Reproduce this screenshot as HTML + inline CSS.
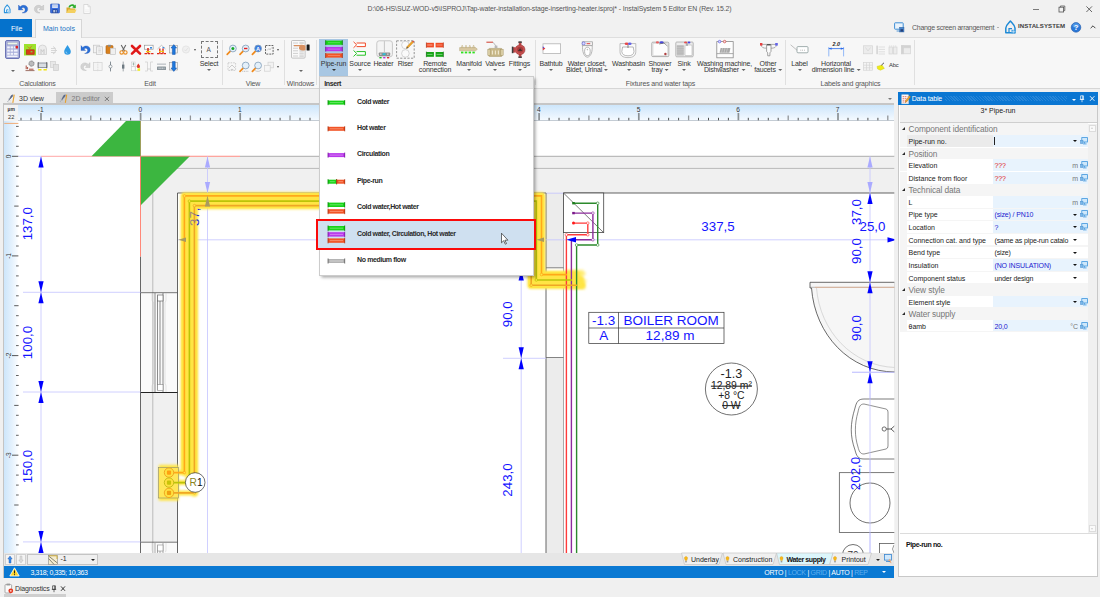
<!DOCTYPE html>
<html><head><meta charset="utf-8"><title>InstalSystem 5 Editor</title>
<style>
*{box-sizing:border-box;margin:0;padding:0}
html,body{width:1100px;height:597px;overflow:hidden;background:#f0f0f0;font-family:"Liberation Sans",sans-serif;font-size:7px;letter-spacing:0;color:#222}
.a{position:absolute}
.t{position:absolute;white-space:nowrap;line-height:1;margin-top:.6px}
b,.t[style*="bold"]{letter-spacing:-.38px}
svg{position:absolute;overflow:visible}
svg text{letter-spacing:0}
#title{left:0;top:0;width:1100px;height:19px;background:#f1f1f1}
#tabs{left:0;top:19px;width:1100px;height:18px;background:#f1f1f1}
#ribbon{left:0;top:36.6px;width:1100px;height:52.2px;background:#f7f7f7;border-top:1px solid #dedede;border-bottom:1px solid #d6d6d6}
.sep{position:absolute;top:40px;width:1px;height:45px;background:#e0e0e0}
.gl{position:absolute;top:80.4px;letter-spacing:-.15px;color:#555;line-height:7px;white-space:nowrap;transform:translateX(-50%)}
.bl{position:absolute;top:60.5px;letter-spacing:-.15px;color:#333;line-height:6.9px;white-space:nowrap;transform:translateX(-50%);text-align:center}
.ar{position:absolute;width:0;height:0;border-left:2px solid transparent;border-right:2px solid transparent;border-top:2.2px solid #666;transform:translateX(-50%)}
.ia{display:inline-block;width:0;height:0;border-left:2px solid transparent;border-right:2px solid transparent;border-top:2.2px solid #666;margin-left:2px;vertical-align:1.5px}
</style></head><body>
<div id="title" class="a"></div>
<div class="t" style="left:367.5px;top:5.6px;font-size:6.9px;letter-spacing:-.09px;color:#555">D:\06-HS\SUZ-WOD-v5\ISPROJ\Tap-water-installation-stage-inserting-heater.isproj* - InstalSystem 5 Editor EN (Rev. 15.2)</div>
<div id="tabs" class="a"></div>
<div class="a" style="left:0;top:19px;width:32px;height:18px;background:#0572cc"></div>
<div class="t" style="left:11px;top:24.5px;color:#fff">File</div>
<div class="a" style="left:35px;top:19px;width:47px;height:19px;background:#f7f7f7;border:1px solid #d6d6d6;border-bottom:none;z-index:2"></div>
<div class="t" style="left:43px;top:24.5px;color:#1a73c4;z-index:3">Main tools</div>
<div id="ribbon" class="a"></div>
<!-- quick access -->
<svg style="left:3px;top:4px" width="50" height="11" viewBox="0 0 50 11">
<path d="M1.4 5.2 C1.4 3.4 3 2.2 4.2 1 C5.4 2.2 7 3.4 7 5.2 V8.6 H1.4 Z" fill="#eaf5fd" stroke="#2d93dc" stroke-width="1.1" stroke-linejoin="round"/><path d="M3.6 8.6 V5.8 H5.4" fill="none" stroke="#2d93dc" stroke-width=".9"/><rect x="4.6" y="6.6" width="2.6" height="2.2" fill="#9fd0f2"/>
<path d="M1 1.6 L1 6.6 L5.6 6.4 L4 4.9 C5.6 3.4 8 4.4 7.6 6.8 C7.3 8.3 6.2 9.1 4.6 9.4 C8 10.2 10.4 8.2 10.2 5.4 C10 2 5.6 .6 2.8 3.4 Z" fill="#2a6fd6" stroke="#1b4fb0" stroke-width=".3" transform="translate(14.5,-.6)"/>
<path d="M10 1.6 L10 6.6 L5.4 6.4 L7 4.9 C5.4 3.4 3 4.4 3.4 6.8 C3.7 8.3 4.8 9.1 6.4 9.4 C3 10.2 .6 8.2 .8 5.4 C1 2 5.4 .6 8.2 3.4 Z" fill="#d0d0d0" stroke="#b4b4b4" stroke-width=".4" transform="translate(30.6,-.6)"/>
</svg>
<svg style="left:50px;top:3px" width="42" height="12" viewBox="0 0 42 12">
<rect x="0.5" y="1" width="9" height="9" rx=".8" fill="#3a6ede" stroke="#2a50b4" stroke-width=".6"/><rect x="2.2" y="1.4" width="5.6" height="3.6" fill="#e4ecfa"/><path d="M2.8 2.6 H7.2 M2.8 3.8 H7.2" stroke="#9ab0dc" stroke-width=".5"/><rect x="2.5" y="6.4" width="5" height="3.4" fill="#1c3a84"/><rect x="3.4" y="7" width="1.4" height="2.4" fill="#dfe9f8"/><rect x="5.6" y="7" width="1.2" height="2.4" fill="#9ab0dc"/>
<path d="M16.5 4.5 H19.5 L20.5 5.4 H25 V10 H16.5 Z" fill="#d8a82c"/><path d="M16.5 10 L18.2 6.4 H26.5 L25 10 Z" fill="#f4d060"/><path d="M18.4 4.2 C19.4 1 23.4 .6 24.6 2.4 L25.8 1.4 L25.8 5.2 L22.2 4.4 L23.4 3.5 C22.6 2.4 20.6 2.8 20 4.4 Z" fill="#2cac2c"/>
<path d="M33.8 1.5 H38 L40.2 3.7 V10.5 H33.8 Z" fill="#fbfbfb" stroke="#cfcfcf" stroke-width=".7"/><path d="M38 1.5 V3.7 H40.2" fill="none" stroke="#cfcfcf" stroke-width=".6"/><path d="M35 7 H39 M35 8.6 H39" stroke="#e6e6e6" stroke-width=".5"/>
</svg>
<!-- window controls -->
<div class="a" style="left:1032.6px;top:8.5px;width:6.2px;height:.9px;background:#7a7a7a"></div>
<svg style="left:1058px;top:4.5px" width="8" height="8" viewBox="0 0 8 8"><rect x="1" y="2.2" width="4.6" height="4.8" fill="none" stroke="#555" stroke-width=".8"/><path d="M2.4 2.2 V1 H6.8 V5.6 H5.6" fill="none" stroke="#555" stroke-width=".8"/></svg>
<svg style="left:1085.5px;top:5.6px" width="7" height="7" viewBox="0 0 7 7"><path d="M.4 .4 L6 6 M6 .4 L.4 6" stroke="#444" stroke-width=".8"/></svg>
<!-- right of tab row -->
<svg style="left:894px;top:22px" width="12" height="12" viewBox="0 0 12 12"><rect x=".6" y=".8" width="8.6" height="6.4" rx=".6" fill="#e9f3fc" stroke="#3f8fd6" stroke-width="1"/><path d="M2.6 9 H6" stroke="#3f8fd6" stroke-width=".9"/><rect x="5.6" y="5.2" width="4.4" height="4.8" fill="#4a86cc" stroke="#2d5f9c" stroke-width=".4"/><rect x="6.5" y="7.2" width="2.6" height="2.4" fill="#233f78"/></svg>
<div class="t" style="left:912px;top:23.6px;color:#5a5a5a;letter-spacing:-.28px">Change screen arrangement</div>
<div class="ar" style="left:998.3px;top:27px;border-left-width:1.5px;border-right-width:1.5px;border-top-width:1.7px;border-top-color:#777"></div>
<svg style="left:1004px;top:19.5px" width="14" height="15" viewBox="0 0 14 15"><path d="M1.8 8 C1.8 5 4.6 3.2 6.4 1 C8.2 3.2 11 5 11 8 V12.8 H1.8 Z" fill="none" stroke="#1e8ad6" stroke-width="1.5" stroke-linejoin="round"/><path d="M5 12.8 V8.6 H8" fill="none" stroke="#1e8ad6" stroke-width="1.2"/><rect x="7.4" y="9.8" width="4" height="3.6" fill="#4aa2e2"/><path d="M9.4 9.8 V13.4 M7.4 11.6 H11.4" stroke="#fff" stroke-width=".4"/></svg>
<div class="t" style="left:1018px;top:22.6px;font-size:6.1px;font-weight:bold;color:#3c3c3c;letter-spacing:0.05px">INSTALSYSTEM</div>
<svg style="left:1070px;top:21px" width="12" height="12" viewBox="0 0 12 12"><circle cx="6" cy="6.4" r="4.8" fill="#2a78d8" stroke="#1b55a8" stroke-width=".6"/><ellipse cx="6" cy="4.4" rx="3.4" ry="2.2" fill="#6aaef0" opacity=".6"/><text x="6" y="9" font-size="7.5" font-weight="bold" fill="#fff" text-anchor="middle" font-family="Liberation Sans">?</text></svg>
<svg style="left:1088.6px;top:24.4px" width="8" height="6" viewBox="0 0 8 6"><path d="M1.6 4.2 L4 1.8 L6.4 4.2" fill="none" stroke="#444" stroke-width="1"/></svg>
<!-- Calculations -->
<svg style="left:5px;top:40px" width="15" height="19" viewBox="0 0 15 19"><rect x=".5" y=".5" width="14" height="18" rx="1.5" fill="#a9afdb" stroke="#6c74b4"/><rect x="2.3" y="2.2" width="10.4" height="2.6" fill="#eef6e6" stroke="#8a90c0" stroke-width=".4"/><g fill="#f2f3fb"><rect x="2.2" y="6.4" width="2.6" height="2"/><rect x="5.6" y="6.4" width="2.6" height="2"/><rect x="9" y="6.4" width="1.6" height="2"/><rect x="2.2" y="9.6" width="2.6" height="2"/><rect x="5.6" y="9.6" width="2.6" height="2"/><rect x="9" y="9.6" width="3.6" height="2"/><rect x="2.2" y="12.8" width="2.6" height="2"/><rect x="5.6" y="12.8" width="2.6" height="2"/><rect x="9" y="12.8" width="3.6" height="2"/><rect x="2.2" y="15.6" width="10.4" height="1.4"/></g><rect x="10.6" y="5.8" width="2.4" height="2.6" rx=".6" fill="#e02020"/></svg>
<div class="ar" style="left:13px;top:69.5px"></div>
<svg style="left:24px;top:43.5px" width="50" height="12" viewBox="0 0 50 12"><rect x="0" y="0" width="12" height="11.5" fill="#9ce22c"/><rect x="2.2" y="5.8" width="8" height="4.6" fill="#d83a1a" stroke="#a02810" stroke-width=".5"/><path d="M3.5 2.5 L5.5 4.5 L8 1.8 M6 5.5 V3" stroke="#d87a1a" stroke-width=".8" fill="none"/><rect x="6.6" y="7" width="1.8" height="1.4" fill="#7fd040"/>
<path d="M14.5 10.5 V5 A4 4 0 0 1 22.5 5 V10.5 Z" fill="#ececec" stroke="#cfcfcf" stroke-width=".8"/><path d="M17 10 V5.5 L18.5 7.5 L20 5.5 V10" fill="none" stroke="#c6c6c6" stroke-width=".9"/>
<path d="M29 2.5 A4 4 0 0 1 29 10 M27 4.5 H31.5 M27 6.5 H33 M27 8.5 H31.5" fill="none" stroke="#d2d2d2" stroke-width=".9"/>
<path d="M43.5 1 C45 3.6 46.8 5.4 46.8 7.4 A3.3 3.3 0 0 1 40.200000000000003 7.4 C40.2 5.4 42 3.6 43.5 1 Z" fill="#2f9ae4"/><path d="M42 7.6 A1.6 1.6 0 0 0 43.3 9.3" stroke="#c4e6fb" stroke-width=".7" fill="none"/></svg>
<svg style="left:24px;top:60px" width="40" height="12" viewBox="0 0 40 12"><circle cx="7.5" cy="3.6" r="2.6" fill="#bbb" stroke="#555" stroke-width=".7" stroke-dasharray="1 .6"/><path d="M1.5 10.6 H10.5" stroke="#7a3a2a" stroke-width=".7"/><path d="M2.2 9.2 V5.5 M3.6 9.2 V7 M5 9.2 H9.5" stroke="#a03a2a" stroke-width=".9"/>
<rect x="14" y="3" width="9" height="4.4" fill="#d9dde2" stroke="#6e7680" stroke-width=".7"/><path d="M14.3 2 V8.4 M22.7 2 V8.4" stroke="#555" stroke-width=".7"/><path d="M14.2 9.8 H17.5 M19.5 9.8 H22.8" stroke="#f2e410" stroke-width="1.6"/>
<rect x="26.5" y="1.5" width="5" height="6" fill="#e8e8e8" stroke="#d0d0d0" stroke-width=".7"/><rect x="29.5" y="4.5" width="5" height="6" fill="#e2e2e2" stroke="#cdcdcd" stroke-width=".7"/></svg>
<div class="gl" style="left:37.5px">Calculations</div>
<div class="sep" style="left:76px"></div>
<!-- Edit row1 -->
<svg style="left:80px;top:44px" width="120" height="11" viewBox="0 0 120 11">
<path d="M1 1.6 L1 6.6 L5.6 6.4 L4 4.9 C5.6 3.4 8 4.4 7.6 6.8 C7.3 8.3 6.2 9.1 4.6 9.4 C8 10.2 10.4 8.2 10.2 5.4 C10 2 5.6 .6 2.8 3.4 Z" fill="#2a6fd6" stroke="#1b4fb0" stroke-width=".3"/>
<g fill="#f2f2f2" stroke="#c4c4c4" stroke-width=".7"><rect x="13.5" y="1.2" width="6" height="7.6"/><rect x="16.5" y="2.8" width="6" height="7.6"/></g><path d="M18.3 5 H20.8 M18.3 6.5 H20.8 M18.3 8 H20.8" stroke="#c9c9c9" stroke-width=".6"/>
<rect x="26" y="1.6" width="7" height="8" rx=".8" fill="#d8801c" stroke="#a85c10" stroke-width=".6"/><rect x="28" y=".8" width="3" height="1.8" fill="#8c8c8c"/><rect x="30.300000000000001" y="4.2" width="5.2" height="6.2" fill="#efefef" stroke="#bdbdbd" stroke-width=".6"/>
<path d="M41.2 1 L44.6 7 M45.8 1 L42.4 7" stroke="#666" stroke-width="1.1"/><circle cx="41.6" cy="8.4" r="1.7" fill="none" stroke="#e88a1c" stroke-width="1.1"/><circle cx="45.4" cy="8.4" r="1.7" fill="none" stroke="#e88a1c" stroke-width="1.1"/>
<path d="M52 2 L60 9.6 M60 2 L52 9.6" stroke="#e01818" stroke-width="2.6" stroke-linecap="round"/>
<rect x="64.5" y="1.2" width="8.6" height="4" fill="#fff" stroke="#888" stroke-width=".6"/><rect x="70" y="3" width="2" height="1.6" fill="#3a8ae0"/><path d="M68 4 V9.5" stroke="#e02818" stroke-width="1.6"/><path d="M64.5 9.600000000000001 H73.5" stroke="#e02818" stroke-width="1.4" stroke-dasharray="2.5 .8"/><path d="M66 7.6 H70.5" stroke="#f0d010" stroke-width="1.2"/>
<path d="M77.5 5 L81.5 1.3 L85.5 5" fill="#fff" stroke="#999" stroke-width=".6"/><rect x="82.5" y="3" width="1.8" height="1.4" fill="#3a8ae0"/><path d="M79.8 9.5 V4.6 M83 9.5 V4.6" stroke="#e02818" stroke-width="1.4"/><path d="M77 9.600000000000001 H86" stroke="#e02818" stroke-width="1.4" stroke-dasharray="2.5 .8"/><path d="M79 7.4 H84" stroke="#f0d010" stroke-width="1.1"/>
<rect x="89.5" y="1.600000000000001" width="8" height="7.4" fill="#f4f4f4" stroke="#999" stroke-width=".6"/><path d="M93.8 .6 L96.6 4 H95.2 V10.4 H92.4 V4 H91 Z" fill="#1f78dc" stroke="#0f4fa8" stroke-width=".5"/>
<circle cx="106" cy="5.5" r="3.6" fill="#f0f0f0" stroke="#dedede" stroke-width=".7"/><path d="M104.2 5.6 L105.6 7 L107.8 4.2" fill="none" stroke="#dcdcdc" stroke-width=".8"/>
</svg>
<div class="ar" style="left:195px;top:48.5px;border-left-width:1.8px;border-right-width:1.8px;border-top-width:2px;border-top-color:#505050"></div>
<!-- Edit row2 -->
<svg style="left:80px;top:61px" width="120" height="11" viewBox="0 0 120 11">
<path d="M10 1.6 L10 6.6 L5.4 6.4 L7 4.9 C5.4 3.4 3 4.4 3.4 6.8 C3.7 8.3 4.8 9.1 6.4 9.4 C3 10.2 .6 8.2 .8 5.4 C1 2 5.4 .6 8.2 3.4 Z" fill="#d4d4d4" stroke="#bcbcbc" stroke-width=".4"/>
<rect x="13.5" y="1.5" width="8.6" height="8" fill="#f4f4f4" stroke="#d2d2d2" stroke-width=".7"/><path d="M17.8 .8 V10.2" stroke="#d0d0d0" stroke-width=".6" stroke-dasharray="1.5 .8"/>
<path d="M30.5 .6 V10.4" stroke="#68747c" stroke-width=".8"/><circle cx="30.5" cy="5.5" r="1.5" fill="#fff" stroke="#68747c" stroke-width=".6"/>
<path d="M43.2 .6 V10.4" stroke="#8a9298" stroke-width=".8"/><rect x="42" y="3.6" width="2.4" height="4" fill="#6e7a82"/>
<g fill="#fdfdfd" stroke="#c8c8c8" stroke-width=".5"><rect x="51.5" y="1" width="3.6" height="4.2"/><rect x="51.5" y="5.8" width="3.6" height="4"/><rect x="55.7" y="5.8" width="3.6" height="4"/></g><rect x="57.5" y="7.4" width="2.6" height="2.4" fill="#f4f020"/><path d="M58.3 2.400000000000001 C59.4 3.8 60 4.4 60 5.4 A1.6 1.6 0 0 1 56.8 5.4 C56.8 4.4 57.4 3.8 58.3 2.4 Z" fill="#e03a2a"/><path d="M53.5 1.5 V4.5 M52.5 3 H54.5" stroke="#7a9a8a" stroke-width=".6"/>
<path d="M65 1 H67.5 V10 H65 M73 1 H70.5 V10 H73" fill="none" stroke="#d2d2d2" stroke-width=".8"/><path d="M67.5 8 H70.5" stroke="#bbb" stroke-width=".6"/>
<rect x="77" y="2.400000000000001" width="9" height="1.6" fill="#c8ccd0"/><rect x="77" y="5.4" width="9" height="3.6" rx=".6" fill="#8c969c"/><path d="M78.5 7.2 H84.5" stroke="#dfe4e8" stroke-width="1" stroke-dasharray="1.2 .6"/>
<rect x="89.5" y="1.600000000000001" width="8" height="7.4" fill="#f4f4f4" stroke="#999" stroke-width=".6"/><path d="M93.8 10.4 L96.6 7 H95.2 V.6 H92.4 V7 H91 Z" fill="#1f78dc" stroke="#0f4fa8" stroke-width=".5"/>
</svg>
<!-- Select -->
<div class="a" style="left:201px;top:41px;width:17px;height:17px;border:1px dashed #777"></div>
<div class="t" style="left:206.5px;top:46px;font-size:6.5px;color:#555;letter-spacing:0">A</div>
<div class="bl" style="left:209px">Select</div><div class="ar" style="left:209px;top:69px"></div>
<div class="gl" style="left:150px">Edit</div>
<div class="sep" style="left:222px"></div>
<!-- View -->
<svg style="left:226px;top:43.5px" width="50" height="12" viewBox="0 0 50 12">
<g id="mg"><path d="M1.2 10.3 L4.6 6.9" stroke="#f08a1c" stroke-width="1.7" stroke-linecap="round"/><circle cx="6.9" cy="4.5" r="3.4" fill="#e4f0fa" stroke="#7f9cb8" stroke-width=".8"/></g>
<circle cx="6.9" cy="4.5" r="1.5" fill="#18a828"/>
<g transform="translate(12.8,0)"><path d="M1.2 10.3 L4.6 6.9" stroke="#f08a1c" stroke-width="1.7" stroke-linecap="round"/><circle cx="6.9" cy="4.5" r="3.4" fill="#e4f0fa" stroke="#7f9cb8" stroke-width=".8"/><rect x="5.2" y="3.8" width="3.4" height="1.4" fill="#e02020"/></g>
<g transform="translate(25.2,0)"><path d="M1.2 10.3 L4.6 6.9" stroke="#f08a1c" stroke-width="1.7" stroke-linecap="round"/><circle cx="6.9" cy="4.5" r="3.4" fill="#3a7ae0" stroke="#7f9cb8" stroke-width=".8"/><text x="6.9" y="6.6" font-size="5.6" font-weight="bold" fill="#fff" text-anchor="middle" font-family="Liberation Sans">A</text></g>
<rect x="39.5" y="1.5" width="7.6" height="8.6" fill="none" stroke="#555" stroke-width=".9" stroke-dasharray="2 1"/><path d="M41 6.5 L43 4.5 L44 6 L45.5 3.5" fill="none" stroke="#aaa" stroke-width=".6"/>
</svg>
<div class="ar" style="left:278px;top:48.5px;border-left-width:1.8px;border-right-width:1.8px;border-top-width:2px;border-top-color:#505050"></div>
<svg style="left:226px;top:60.5px" width="50" height="12" viewBox="0 0 50 12">
<rect x="2" y="1.8" width="7.6" height="7.6" fill="none" stroke="#c4c4c4" stroke-width=".8" stroke-dasharray="1.6 1"/><path d="M3 7 L6 4 L9 7 M4.5 9 A2 2 0 0 1 7.5 9" fill="none" stroke="#b8b8b8" stroke-width=".7"/>
<g transform="translate(12.8,0)"><path d="M1.2 10.3 L4.6 6.9" stroke="#f08a1c" stroke-width="1.7" stroke-linecap="round"/><circle cx="6.9" cy="4.5" r="3.4" fill="#e4f0fa" stroke="#7f9cb8" stroke-width=".8"/><path d="M3.5 10.3 H9.5" stroke="#999" stroke-width=".6" stroke-dasharray="1 .7"/></g>
<g transform="translate(25.2,0)"><path d="M1.2 10.3 L4.6 6.9" stroke="#f08a1c" stroke-width="1.7" stroke-linecap="round"/><circle cx="6.9" cy="4.5" r="3.4" fill="#e4f0fa" stroke="#7f9cb8" stroke-width=".8"/><path d="M4 9.6 A4 3 0 0 0 10 9" stroke="#aaa" stroke-width=".6" fill="none"/></g>
<rect x="42" y="1.2" width="5.6" height="5.6" fill="#f2f2f2" stroke="#d2d2d2" stroke-width=".7"/><rect x="38.6" y="4.6" width="5.6" height="5.6" fill="#f6f6f6" stroke="#d2d2d2" stroke-width=".7"/>
</svg>
<div class="ar" style="left:278px;top:65.5px;border-left-width:1.8px;border-right-width:1.8px;border-top-width:2px;border-top-color:#505050"></div>
<div class="gl" style="left:253px">View</div>
<div class="sep" style="left:284px"></div>
<!-- Windows -->
<svg style="left:291px;top:40px" width="20" height="19" viewBox="0 0 20 19"><rect x=".5" y=".5" width="13.6" height="17.6" rx="1" fill="#fafafa" stroke="#b4b4b4" stroke-width=".8"/><g stroke="#bdbdbd" stroke-width=".7"><path d="M2 3 H7 M2 5.6 H7 M2 8.200000000000001 H7 M2 10.8 H7 M2 13.4 H7 M2 16 H7"/></g><g fill="#d9d9d9"><rect x="8.4" y="1.8" width="4.4" height="2.2"/><rect x="8.4" y="9.6" width="4.4" height="2.2"/><rect x="8.4" y="12.4" width="4.4" height="2.2"/><rect x="8.4" y="15.2" width="4.4" height="2"/></g><path d="M3 5 H9 C11 4.6 13 5 14.5 5.6 V10 C12.5 11 10 10.6 8.6 9.6 C7.6 8.6 7.8 7 8.6 6.200000000000001 H3 Z" fill="#d89060"/><rect x="15.6" y="4.6" width="3" height="5.8" rx=".5" fill="#181818"/></svg>
<div class="ar" style="left:301px;top:69.5px"></div>
<div class="gl" style="left:300.5px">Windows</div>
<div class="sep" style="left:316px"></div>
<!-- Insert group -->
<div class="a" style="left:319px;top:38.5px;width:29px;height:38px;background:#a8c7e3"></div>
<svg style="left:324.5px;top:40px" width="18" height="18" viewBox="0 0 18 18"><rect x=".5" y=".6" width="17" height="4.2" fill="#18d418"/><rect x=".5" y="7" width="17" height="4.2" fill="#b838ea"/><rect x=".5" y="13.4" width="17" height="4.2" fill="#f25426"/><g stroke-width=".5" stroke-opacity=".75"><path d="M3 2.7 H15" stroke="#b6f6b6"/><path d="M3 9.1 H15" stroke="#ecc0fa"/><path d="M3 15.5 H15" stroke="#fcc8b4"/></g><g stroke-width=".8"><path d="M.7 .2 V5.2 M17.3 .2 V5.2" stroke="#0a7a0a"/><path d="M.7 6.6 V11.6 M17.3 6.6 V11.6" stroke="#6a1a8c"/><path d="M.7 13 V18 M17.3 13 V18" stroke="#9c2c10"/></g></svg>
<div class="bl" style="left:333.5px">Pipe-run</div><div class="ar" style="left:333.5px;top:69px;border-top-color:#333"></div>
<svg style="left:352px;top:41px" width="15" height="17" viewBox="0 0 15 17"><path d="M1.5 .8 L4.6 3.8 L1.5 6.8 M4.6 2 H13.4 V5.6 H4.6" fill="#fff" stroke="#f04a28" stroke-width="1"/><path d="M1.5 9.4 L4.6 12.4 L1.5 15.4 M4.6 10.6 H13.4 V14.2 H4.6" fill="#fff" stroke="#22c022" stroke-width="1"/></svg>
<div class="bl" style="left:360px">Source</div><div class="ar" style="left:360px;top:69px"></div>
<svg style="left:375.5px;top:39.5px" width="18" height="19" viewBox="0 0 18 19"><rect x=".8" y=".8" width="15.6" height="16" rx="2.4" fill="#f4f4f4" stroke="#c2c2c2" stroke-width=".9"/><path d="M8.4 1.2 V12" stroke="#b0b0b0" stroke-width=".7"/><rect x="2.8" y="12.4" width="11.4" height="3.6" rx=".8" fill="#8e8e8e"/><rect x="6.6" y="13.2" width="3" height="2" fill="#30c0d8"/><rect x="4" y="13.4" width="1.6" height="1.6" fill="#c6c6c6"/><rect x="11" y="13.4" width="1.6" height="1.6" fill="#c6c6c6"/><rect x="3.4" y="17" width="2.2" height="1.4" fill="#20c020"/><rect x="7.2" y="17" width="2.2" height="1.4" fill="#b030e0"/><rect x="11" y="17" width="2.2" height="1.4" fill="#e03030"/></svg>
<div class="bl" style="left:383.5px">Heater</div>
<svg style="left:396px;top:39.5px" width="20" height="19" viewBox="0 0 20 19"><rect x=".6" y=".8" width="17.6" height="17.4" fill="none" stroke="#8a8a8a" stroke-width=".9" stroke-dasharray="2.2 1.4"/><circle cx="9.4" cy="5" r="3.8" fill="#fafafa" stroke="#bcbcbc" stroke-width=".6"/><circle cx="9.4" cy="13.4" r="3.8" fill="#fafafa" stroke="#bcbcbc" stroke-width=".6"/><path d="M10.4 8.4 L11 6.6 L16 1.2 L17.4 2.4 L12.2 7.8 Z" fill="#f0a628" stroke="#b87410" stroke-width=".4"/><path d="M16 1.2 L17.4 2.4 L18.2 1.4 L17 .4 Z" fill="#d84a3a"/><path d="M10.4 8.4 L11 6.6 L12.2 7.8 Z" fill="#555"/></svg>
<div class="bl" style="left:405.5px">Riser</div>
<svg style="left:426px;top:41.5px" width="18" height="16" viewBox="0 0 18 16"><rect x=".3" y=".8" width="7.6" height="4.6" fill="#f04a24"/><rect x="9.6" y=".8" width="7.8" height="4.6" fill="#f04a24"/><path d="M10.5 3 H16.5" stroke="#fcd0c0" stroke-width=".5"/><path d="M1.2 3 H6.5" stroke="#fcd0c0" stroke-width=".7"/><rect x=".3" y="10" width="7.6" height="4.8" fill="#14a414"/><rect x="9.6" y="10" width="7.8" height="4.8" fill="#14a414"/><path d="M1.2 12.4 H6.5 M10.5 12.4 H16.5" stroke="#b8f0b8" stroke-width=".6"/><g stroke="#0a5a0a" stroke-width=".6"><path d="M.4 9.6 V15.2 M17.4 9.6 V15.2"/></g><g stroke="#a02810" stroke-width=".6"><path d="M.4 .4 V5.8 M17.4 .4 V5.8"/></g></svg>
<div class="bl" style="left:435px">Remote<br>connection</div>
<svg style="left:459px;top:44px" width="20" height="11" viewBox="0 0 20 11"><g fill="#e8dcc0" stroke="#b8a878" stroke-width=".4"><path d="M2 4 L3.2 1 L4.4 4 Z M5.8 4 L7 1 L8.2 4 Z M9.6 4 L10.8 1 L12 4 Z M13.4 4 L14.6 1 L15.8 4 Z"/></g><path d="M.6 3.6 H16.6 L18.4 5.2 L16.6 6.8 H.6 Z" fill="#d8c8a0" stroke="#a89868" stroke-width=".4"/><g fill="#30e020"><rect x="2" y="7.6" width="2.4" height="1.8"/><rect x="5.8" y="7.6" width="2.4" height="1.8"/><rect x="9.6" y="7.6" width="2.4" height="1.8"/><rect x="13.4" y="7.6" width="2.4" height="1.8"/></g></svg>
<div class="bl" style="left:469px">Manifold</div><div class="ar" style="left:469px;top:69px"></div>
<svg style="left:485.5px;top:41px" width="19" height="17" viewBox="0 0 19 17"><path d="M.4 1.2 H7" stroke="#d03a2a" stroke-width="1"/><path d="M7 1.2 L10 5" stroke="#aaa" stroke-width=".8"/><rect x="8.600000000000001" y="4.6" width="2.8" height="2.4" fill="#b8b8b8"/><rect x="2.6" y="7.4" width="13.6" height="8" rx="1" fill="#c8b888" stroke="#a09060" stroke-width=".5"/><rect x="1.8" y="8.4" width="2.6" height="6" fill="#d8cca4" stroke="#a09060" stroke-width=".4"/><rect x="14.6" y="8.4" width="2.6" height="6" fill="#d8cca4" stroke="#a09060" stroke-width=".4"/><path d="M6.4 9.4 V13.4 M9.4 9.4 V13.4 M12.4 9.4 V13.4" stroke="#f0e8d0" stroke-width="1.1"/></svg>
<div class="bl" style="left:495px">Valves</div><div class="ar" style="left:495px;top:69px"></div>
<svg style="left:511px;top:40.5px" width="16" height="18" viewBox="0 0 16 18"><rect x="7.8" y=".6" width="2.6" height="16.4" fill="#c04848"/><rect x="7.4" y=".4" width="3.4" height="1.6" fill="#4a4a4a"/><rect x="7.4" y="15.4" width="3.4" height="1.6" fill="#4a4a4a"/><circle cx="9.1" cy="8.8" r="4.9" fill="#c85050" stroke="#8c2c2c" stroke-width=".5"/><circle cx="9.1" cy="8.8" r="3" fill="#a83c3c"/><path d="M6.8 10 L9.1 7.2 L11.4 10 Z" fill="#4a2c2c"/><rect x="1" y="6.2" width="3.6" height="5.4" fill="#c04848"/><rect x=".8" y="5.6" width="1.6" height="6.6" fill="#3c3c3c"/></svg>
<div class="bl" style="left:519.5px">Fittings</div><div class="ar" style="left:519.5px;top:69px"></div>
<div class="sep" style="left:535px"></div>
<!-- Fixtures -->
<svg style="left:542px;top:43px" width="20" height="11" viewBox="0 0 20 11"><rect x="1" y=".8" width="17.6" height="9.6" fill="#fff" stroke="#b4b4b4" stroke-width=".8"/><path d="M.8 3.8 L3.4 5.6 L.8 7.4 Z" fill="#e04040"/><path d="M.8 3.2 L2.4 4.4 L.8 5.4 Z" fill="#5050e0"/></svg>
<div class="bl" style="left:551px">Bathtub</div><div class="ar" style="left:551px;top:69px"></div>
<svg style="left:581px;top:40.5px" width="13" height="18" viewBox="0 0 13 18"><rect x="1.2" y=".8" width="10.4" height="3.6" fill="#f2f2f2" stroke="#9a9a9a" stroke-width=".7"/><circle cx="2.6" cy="2.4" r="1.5" fill="#dcdcfc" stroke="#5050e0" stroke-width=".6"/><rect x="5.6" y="2" width="3.6" height="1.2" fill="#e06060"/><path d="M1.6 4.6 C1.2 10 2.6 15.6 6.4 16.2 C10.2 15.6 11.6 10 11.200000000000001 4.6 Z" fill="#fafafa" stroke="#9a9a9a" stroke-width=".7"/><ellipse cx="6.4" cy="10.4" rx="2.8" ry="4.2" fill="#fff" stroke="#8a8a8a" stroke-width=".6"/><circle cx="6.4" cy="8.6" r=".8" fill="#bbb"/></svg>
<div class="bl" style="left:587px">Water closet,<br>Bidet, Urinal<span class="ia"></span></div>
<svg style="left:619px;top:41.5px" width="18" height="17" viewBox="0 0 18 17"><path d="M1 1.6 H16.8 V9.4 C16.8 13.4 14.4 15.6 9 15.6 C3.4 15.6 1 13.4 1 9.4 Z" fill="#fafafa" stroke="#a4a4a4" stroke-width=".7"/><path d="M3.6 5 H14.2 L15 9.6 C14.6 12.6 12.6 13.8 9 13.8 C5.4 13.8 3.2 12.6 2.8 9.6 Z" fill="#fff" stroke="#8c8c8c" stroke-width=".6"/><path d="M9 2 V6" stroke="#555" stroke-width=".7"/><ellipse cx="7.6" cy="1.8" rx="2" ry="1.2" fill="#e84848"/><ellipse cx="10.8" cy="1.8" rx="1.8" ry="1.2" fill="#6060e8"/></svg>
<div class="bl" style="left:628.5px">Washbasin</div><div class="ar" style="left:628.5px;top:69px"></div>
<svg style="left:650.5px;top:41px" width="19" height="17" viewBox="0 0 19 17"><rect x=".8" y="1.2" width="17" height="14.4" rx="1" fill="#fdfdfd" stroke="#9a9a9a" stroke-width=".8"/><rect x="2" y="2.4" width="14.6" height="12" fill="none" stroke="#c8c8c8" stroke-width=".5"/><ellipse cx="6.4" cy="1.4" rx="1.6" ry="1.1" fill="#e86060"/><ellipse cx="10.6" cy="1.4" rx="2" ry="1.2" fill="#4848e0"/><path d="M8 3 L13 2 L16.4 5" fill="none" stroke="#555" stroke-width=".6"/><circle cx="14.4" cy="13" r="1.2" fill="#b04040"/></svg>
<div class="bl" style="left:660px">Shower<br>tray<span class="ia"></span></div>
<svg style="left:674.5px;top:41px" width="19" height="17" viewBox="0 0 19 17"><rect x=".8" y="1" width="17.4" height="14.8" rx="1" fill="#ececec" stroke="#a8a8a8" stroke-width=".8"/><rect x="1.8" y="4" width="7" height="10.6" fill="#c4c4c4"/><path d="M1.8 5.6 H8.8 M1.8 7.4 H8.8 M1.8 9.200000000000001 H8.8 M1.8 11 H8.8 M1.8 12.8 H8.8" stroke="#a8a8a8" stroke-width=".5"/><rect x="10" y="4" width="7" height="10.6" rx=".8" fill="#fff" stroke="#a0a0a0" stroke-width=".5"/><ellipse cx="10.6" cy="1.4" rx="1.6" ry="1" fill="#e85050"/><ellipse cx="14" cy="1.4" rx="1.4" ry="1" fill="#4848e0"/><path d="M12 2 V5" stroke="#444" stroke-width=".6"/></svg>
<div class="bl" style="left:684px">Sink</div><div class="ar" style="left:684px;top:69px"></div>
<svg style="left:715.5px;top:40px" width="18" height="19" viewBox="0 0 18 19"><rect x=".8" y="1.6" width="16.4" height="16.2" fill="#fdfdfd" stroke="#8c8c8c" stroke-width=".8"/><path d="M.8 13.6 H17.2" stroke="#8c8c8c" stroke-width=".7"/><path d="M4.6 8 H14.4 L13.4 12.8 H3.6 Z" fill="#a8a8a8"/><path d="M6.6 8 L5.6 12.8 M9 8 L8 12.8 M11.4 8 L10.4 12.8" stroke="#d8d8d8" stroke-width=".6"/><circle cx="3.6" cy="1.6" r="1.3" fill="#d8d8fc" stroke="#4848e0" stroke-width=".6"/><circle cx="8.6" cy="1.6" r="1.3" fill="#fcd8d8" stroke="#c03030" stroke-width=".6"/></svg>
<div class="bl" style="left:724.5px">Washing machine,<br>Dishwasher<span class="ia"></span></div>
<svg style="left:759px;top:42px" width="20" height="15" viewBox="0 0 20 15"><path d="M2 2.4 H17.6 M2.2 2.4 C2.2 5.6 4.4 6.2 7.6 6.2 M17.4 2.4 C17.4 5.6 15.2 6.2 12 6.2" fill="none" stroke="#8c8c8c" stroke-width=".7"/><path d="M7.6 2.8 H12 V9.4 L10.9 10.8 V13.8 H8.7 V10.8 L7.6 9.4 Z" fill="#fcfcfc" stroke="#7c7c7c" stroke-width=".7"/><path d="M8 2.8 H11.6" stroke="#333" stroke-width="1"/><rect x="1" y="1" width="2.4" height="2.6" fill="#e84040"/><rect x="16.2" y="1" width="2.6" height="2.6" fill="#6464e8"/></svg>
<div class="bl" style="left:768px">Other<br>faucets<span class="ia"></span></div>
<div class="gl" style="left:660.5px">Fixtures and water taps</div>
<div class="sep" style="left:785px"></div>
<!-- Labels -->
<svg style="left:789.5px;top:43.5px" width="20" height="11" viewBox="0 0 20 11"><path d="M.6 .8 L7 6.2" stroke="#999" stroke-width=".6"/><rect x="7" y="2.600000000000001" width="11" height="6.2" rx="1" fill="#fff" stroke="#8a9a9a" stroke-width=".8"/><path d="M10.4 6.2 H11.2 M12.2 6.2 H13 M14 6.2 H14.8" stroke="#888" stroke-width=".7"/></svg>
<div class="bl" style="left:799.5px">Label</div><div class="ar" style="left:799.5px;top:69px"></div>
<svg style="left:828px;top:40.5px" width="17" height="16" viewBox="0 0 17 16"><path d="M.8 6 V15.4 M15.6 6 V15.4" stroke="#78a8f8" stroke-width=".8"/><path d="M.8 7.6 H15.6" stroke="#2a6ae8" stroke-width=".8"/><path d="M.8 7.6 L3.6 6.4 V8.8 Z M15.6 7.6 L12.8 6.4 V8.8 Z" fill="#2a6ae8"/><text x="8.2" y="5" font-size="5.4" font-weight="bold" font-style="italic" fill="#222" text-anchor="middle" font-family="Liberation Sans">2.0</text></svg>
<div class="bl" style="left:836px">Horizontal<br>dimension line<span class="ia"></span></div>
<svg style="left:863px;top:44.5px" width="50" height="10" viewBox="0 0 50 10"><g fill="#ececec" stroke="#d4d4d4" stroke-width=".7"><rect x=".5" y=".8" width="9" height="8"/><path d="M2.5 2.5 L5 6 L7.5 2.5" fill="none"/><rect x="13.4" y=".6" width="1.4" height="8.6" fill="#d0d0d0" stroke="none"/><path d="M15.6 2 H22 M15.6 4.4 H22 M15.6 6.8 H22 M15.6 9 H22" fill="none"/><rect x="26" y="2" width="3.6" height="7" /><rect x="30.4" y="2" width="3.6" height="7"/><path d="M26 1 H34" stroke-dasharray="1.2 .8"/><rect x="38.6" y=".8" width="9" height="8"/><rect x="38.6" y=".8" width="9" height="2" fill="#d2d2d2"/><rect x="38.6" y=".8" width="2" height="8" fill="#d2d2d2"/></g></svg>
<svg style="left:863px;top:61.5px" width="50" height="10" viewBox="0 0 50 10"><g fill="#f4f4f4" stroke="#d4d4d4" stroke-width=".7"><rect x=".5" y=".6" width="9" height="7.6"/><path d="M.5 3.2 H9.5 M.5 5.8 H9.5 M3.5 .6 V8.200000000000001 M6.5 .6 V8.200000000000001" fill="none"/></g><path d="M14 4.4 L19 3 L21.4 6.4 L17.4 8.200000000000001 L14.6 7 Z" fill="#f0ec18" stroke="#c8c410" stroke-width=".4"/><path d="M18.4 3.2 L21 .8" stroke="#444" stroke-width=".9"/></svg>
<div class="t" style="left:889px;top:62.5px;font-size:5.8px;letter-spacing:-.2px;color:#333">Abc</div>
<div class="gl" style="left:850.5px">Labels and graphics</div>
<div class="sep" style="left:914.3px"></div>
<!-- doc tabs -->
<div class="a" style="left:56.2px;top:92.1px;width:56.7px;height:11.4px;background:#cbcbcb"></div>
<svg style="left:7px;top:93.5px" width="70" height="10" viewBox="0 0 70 10"><g id="dti"><path d="M.4 8 L6 1.6" stroke="#9aa0a8" stroke-width=".7"/><path d="M2 6 L5.2 2.6 L5.8 .8 L4.2 1.6 Z" fill="#5a6a8a" stroke="#4a5878" stroke-width=".5"/><path d="M1 4.600000000000001 L3.6 7" stroke="#b0b4bc" stroke-width=".6"/><path d="M7.2 .6 L5.8 8.8" stroke="#e6a02a" stroke-width="1.1"/><path d="M.6 9 H5" stroke="#b8b8b8" stroke-width=".5"/></g><use href="#dti" x="52.5"/></svg>
<div class="t" style="left:19px;top:94.3px;color:#333">3D view</div>
<div class="t" style="left:71.5px;top:94.3px;color:#7a7a7a">2D editor</div>
<svg style="left:103.5px;top:96px" width="6" height="6" viewBox="0 0 6 6"><path d="M.8 .8 L5 5 M5 .8 L.8 5" stroke="#666" stroke-width=".8"/></svg>
<div class="ar" style="left:889.5px;top:98px;border-top-color:#777"></div>
<!-- editor frame -->
<div class="a" style="left:3.4px;top:103.2px;width:891px;height:474.5px;background:#e6e6e6;border-left:.9px solid #c4c4c4;border-top:2.2px solid #c6c6c6"></div>
<!-- rulers -->
<div class="a" style="left:4.3px;top:105.4px;width:14.1px;height:15.3px;background:#f3f3f3"></div>
<div class="a" style="left:18.4px;top:105.4px;width:875.9px;height:15.6px;background:linear-gradient(#cde6fb,#e2f0fd 55%,#f4faff);border-bottom:.8px solid #c4ccd4"></div>
<div class="a" style="left:4.3px;top:121px;width:14.1px;height:432px;background:linear-gradient(90deg,#cde6fb,#e4f1fd 55%,#fbfdff)"></div>
<div class="a" style="left:18.4px;top:121px;width:875.9px;height:432px;background:#fff"></div>
<div class="a" style="left:894.2px;top:103px;width:4.2px;height:476px;background:#f0f0f0"></div>
<svg style="left:0;top:0" width="1100" height="597" viewBox="0 0 1100 597" font-family="Liberation Sans">
<defs><clipPath id="cv"><rect x="18.4" y="121" width="875.9" height="432"/></clipPath>
<filter id="gl" x="-20%" y="-20%" width="140%" height="140%"><feGaussianBlur stdDeviation="1.1"/></filter>
<filter id="gl2" x="-30%" y="-30%" width="160%" height="160%"><feGaussianBlur stdDeviation="1.6"/></filter>
<path id="au" d="M0 0 L-2.6 11 H2.6 Z"/><path id="ad" d="M0 0 L-2.6 -11 H2.6 Z"/>
</defs>
<g clip-path="url(#cv)">
<!-- walls fill -->
<path d="M140.500000000000001 156.3 H895 V193 H177.5 V553 H140.5 Z" fill="#f0f0f0"/>
<rect x="546" y="193" width="17.5" height="75" fill="#ececec"/>
<rect x="546" y="357.5" width="17.5" height="196" fill="#ececec"/>
<rect x="141" y="293" width="36" height="99.5" fill="#fafafa"/>
<rect x="141" y="542.5" width="36" height="12" fill="#fafafa"/>
<!-- wall lines -->
<path d="M240 156.3 H895" stroke="#9a9a9a" stroke-width=".8"/>
<path d="M152.8 168.4 H895 M152.8 168.4 V553" fill="none" stroke="#a4a4a4" stroke-width=".7"/>
<path d="M177.500000000000001 553 V193 H546 M563.5 193 H895" fill="none" stroke="#484848" stroke-width=".85"/><path d="M546 193.2 H563.5" stroke="#c4c4ff" stroke-width=".8"/>
<path d="M140.500000000000001 256.5 V553" stroke="#555" stroke-width=".9"/>
<path d="M41 156.3 H240" stroke="#ff9c9c" stroke-width=".9"/>
<path d="M140.500000000000001 121 V256.5" stroke="#ff7a6a" stroke-width=".9"/>
<path d="M140.500000000000001 156.3 H240" stroke="#ff8c7c" stroke-width=".5"/>
<!-- green triangles -->
<path d="M126 121 H140.5 V156.3 H91.5 Z" fill="#3cb640"/>
<path d="M140.500000000000001 156.3 H189.8 L140.5 205.5 Z" fill="#3cb640"/>
<path d="M140.500000000000001 156.3 V205.5" stroke="#ff7a6a" stroke-width=".9"/><path d="M140.500000000000001 156.3 H189.8" stroke="#ff8c7c" stroke-width=".6"/>
<!-- window 1 -->
<path d="M140.500000000000001 292.7 H177.5" stroke="#555" stroke-width=".8"/>
<path d="M140.500000000000001 392.5 H177.5" stroke="#222" stroke-width="1.2"/>
<path d="M155 293 V392 M157.5 296 V390 M160 296 V390 M163 293 V392" stroke="#5a5a5a" stroke-width=".7"/>
<rect x="157.5" y="295" width="5.5" height="6" fill="#fff" stroke="#555" stroke-width=".6"/><rect x="157.5" y="384.5" width="5.5" height="6" fill="#fff" stroke="#777" stroke-width=".5"/>
<path d="M152 293 V300 Q152 302 153.5 302 V384 Q152 384 152 386 V392 M166 293 V300 Q166 302 165 302 V384 Q166 384 166 386 V392" fill="none" stroke="#c8c8c8" stroke-width=".5"/>
<!-- window 2 -->
<path d="M140.500000000000001 542.2 H177.5" stroke="#555" stroke-width=".8"/>
<path d="M155 543 V553 M157.5 546 V553 M160 546 V553 M163 543 V553" stroke="#777" stroke-width=".6"/><rect x="157.5" y="545" width="5.5" height="6" fill="#fff" stroke="#777" stroke-width=".5"/>
<path d="M152 543 V550 Q152 552 153.5 552 M166 543 V550 Q166 552 165 552" fill="none" stroke="#c8c8c8" stroke-width=".5"/>
<!-- partition wall -->
<path d="M546 193 V553" stroke="#666" stroke-width="1"/>
<path d="M563.5 193 V553" stroke="#888" stroke-width=".7"/>
<path d="M546 267.8 H563.5 M546 273.5 H563.5" stroke="#555" stroke-width=".7"/>
<path d="M546 357.5 H563.5" stroke="#666" stroke-width=".8"/>
<!-- shaft -->
<rect x="563.5" y="193" width="40.2" height="39.6" fill="#fff" stroke="#444" stroke-width=".8"/>
<path d="M564 193.5 L603.5 232.5" stroke="#5a5a5a" stroke-width=".8"/>
<!-- dim lines (lavender) -->
<g stroke="#c4c4ff" stroke-width=".8" fill="none">
<path d="M41 156.3 V553"/><path d="M23 292.3 H140.5 M23 392 H140.5 M23 541.9 H140.5"/>
<path d="M207.500000000000001 156.3 V553"/><path d="M178 239.8 H895"/>
<path d="M521.2 275 V553"/><path d="M503 358.3 H546"/>
<path d="M870 156.3 V553"/><path d="M852 372.3 H895"/>
</g>
<!-- highlight glow -->
<g filter="url(#gl)" fill="none" stroke="#ffe544" stroke-width="7.5" stroke-linejoin="round" stroke-linecap="round">
<path d="M184.4 472.6 V195.9 H541.5 V274.6 H576"/>
<path d="M189.4 482.6 V201.1 H536.3 V280 H580"/>
<path d="M194.4 492.9 V205.6 H531.2 V285.2 H582"/>
<rect x="160" y="466" width="17.5" height="33.5" fill="#ffe544" stroke-width="3" stroke-opacity=".8"/>
<path d="M169 472.6 H184.4 M169 482.6 H186 M169 492.9 H194.4" stroke-width="5"/>
</g>
<g fill="none" stroke="#ffe544" stroke-width="5.5" stroke-linejoin="round"><path d="M184.4 472.6 V195.9 H541.5 V274.6 H566"/><path d="M189.4 482.6 V201.1 H536.3 V280 H569"/><path d="M194.4 492.9 V205.6 H531.2 V285.2 H572"/></g>
<path d="M566 270 H583 L586 274 L582 277 L587 281 L582 285 L586 289 H566 Z" fill="#ffe544" opacity=".75" filter="url(#gl2)"/>
<!-- coloured pipes -->
<g fill="none" stroke-width="1.4">
<path d="M573.5 203.2 H597.7 V245 H576.6 V553" stroke="#2c8a2c"/>
<path d="M573.5 213.1 H592.9 V239.8 H571.4 V553" stroke="#8c2c9c"/>
<path d="M573.5 223.1 H587.8 V234.8 H566.4 V553" stroke="#ff3a3a"/>
</g>
<g fill="#fff" stroke-width=".6"><g stroke="#2c8a2c"><circle cx="597.7" cy="203.2" r="1.3"/><circle cx="597.7" cy="245" r="1.3"/><circle cx="576.6" cy="245" r="1.3"/></g><g stroke="#8c2c9c"><circle cx="592.9" cy="213.1" r="1.3"/><circle cx="592.9" cy="239.8" r="1.3"/></g><g stroke="#ff3a3a"><circle cx="587.8" cy="223.1" r="1.3"/><circle cx="587.8" cy="234.8" r="1.3"/><circle cx="566.4" cy="234.8" r="1.3"/></g></g>
<rect x="572.2" y="202" width="2.6" height="2.4" fill="#1a7a1a"/><rect x="572.2" y="211.9" width="2.6" height="2.4" fill="#7a1a8a"/><circle cx="573.5" cy="223.1" r="1.5" fill="#ff1a1a"/>
<!-- riser block -->
<rect x="158.6" y="467.6" width="20" height="30.4" fill="#ffe658" stroke="#8a8a70" stroke-width=".6"/>
<!-- highlighted pipes -->
<g fill="none" stroke-width="1.6">
<path d="M169 472.6 H184.4 V195.9 H541.5 V274.6 H567" stroke="#ffa818"/>
<path d="M169 482.6 H189.4 V201.1 H536.3 V280 H572" stroke="#bcc408"/>
<path d="M169 492.9 H194.4 V205.6 H531.2 V285.2 H577" stroke="#f0a624"/>
</g>
<g fill="#ffe544" stroke-width=".7"><circle cx="184.4" cy="195.9" r="1.3" stroke="#ffa818"/><circle cx="189.4" cy="201.1" r="1.3" stroke="#bcc408"/><circle cx="194.4" cy="205.6" r="1.3" stroke="#f0a624"/><circle cx="531.2" cy="285.2" r="1.3" stroke="#f0a624"/><circle cx="536.3" cy="280" r="1.3" stroke="#bcc408"/><circle cx="541.5" cy="274.6" r="1.3" stroke="#ffa818"/><circle cx="184.4" cy="472.6" r="1.2" stroke="#ffa818"/><circle cx="194.4" cy="492.9" r="1.2" stroke="#f0a624"/></g>
<g fill="#ffe040" stroke-width="1"><circle cx="169" cy="472.6" r="4.7" stroke="#f0a820"/><circle cx="169" cy="482.6" r="4.7" stroke="#c8bc18"/><circle cx="169" cy="492.9" r="4.7" stroke="#f0a820"/></g>
<rect x="166.9" y="470.5" width="4.2" height="4.2" rx="1" fill="#ffa010"/><rect x="166.9" y="480.5" width="4.2" height="4.2" rx="1" fill="#c8c408"/><rect x="166.9" y="490.8" width="4.2" height="4.2" rx="1" fill="#f0a010"/>
<circle cx="195.2" cy="482.5" r="9.8" fill="#fff" stroke="#333" stroke-width=".7"/>
<text x="189.6" y="486.3" font-size="10.2" fill="#111"><tspan fill="#8a8420">R</tspan><tspan dx=".1">1</tspan></text>
<clipPath id="c37"><rect x="186" y="208.4" width="20" height="30"/></clipPath><linearGradient id="g37" gradientUnits="userSpaceOnUse" x1="0" y1="-10" x2="0" y2="2"><stop offset="0" stop-color="#5a48a8" stop-opacity=".6"/><stop offset=".64" stop-color="#5a48a8" stop-opacity=".6"/><stop offset=".66" stop-color="#2a2ae0"/><stop offset="1" stop-color="#2a2ae0"/></linearGradient><g clip-path="url(#c37)"><text transform="translate(198.8,213) rotate(-90)" font-size="13.3" fill="url(#g37)" text-anchor="middle">37,0</text></g>
<!-- bathtub (corner) -->
<path d="M810 282.3 H895 V372 C850 372 815 335 811.5 288 H810 Z" fill="#f6f6f6" stroke="#444" stroke-width=".8"/>
<path d="M810 287.3 H895" stroke="#777" stroke-width=".5"/><path d="M815 287.3 H895" stroke="#f0a070" stroke-width=".5"/>
<path d="M816.5 288 C820 331 852 366 895 367.5" fill="none" stroke="#c4c4c4" stroke-width=".6"/>
<!-- washbasin -->
<path d="M895 399 H864 C858 399 856.5 402 855 408 C850 424 850 436 855 450 C856.5 456 858 459 864 459 H895" fill="#fff" stroke="#444" stroke-width=".7"/>
<path d="M864 404 L886 409 Q888 409.5 888 412 V446 Q888 448.5 886 449 L864 454 C860 454 859 451 858 447 C854.5 436 854.5 424 858 412 C859 407 860 404 864 404 Z" fill="#fff" stroke="#444" stroke-width=".6"/>
<circle cx="884.2" cy="429" r="2.1" fill="#fff" stroke="#333" stroke-width=".7"/><path d="M886.3 429 H891 M891 429 L895 425.5 M891 429 L895 432.5" stroke="#333" stroke-width=".8"/>
<!-- washing machine -->
<rect x="839.3" y="472.7" width="60" height="59.8" fill="#fff" stroke="#444" stroke-width=".7"/><circle cx="870" cy="503" r="20" fill="#fff" stroke="#333" stroke-width=".7"/>
<circle cx="853" cy="555" r="10.5" fill="#fff" stroke="#333" stroke-width=".7"/><rect x="879.5" y="543.5" width="20" height="15" fill="#fff" stroke="#444" stroke-width=".7"/><path d="M894 545 Q891 549 894 553" fill="none" stroke="#555" stroke-width=".6"/>
<text x="853" y="559.3" font-size="10" fill="#333" text-anchor="middle">70</text>
<!-- dims redraw above furniture -->
<path d="M870 282 V553" stroke="#c4c4ff" stroke-width=".8"/><path d="M852 372.3 H895" stroke="#c4c4ff" stroke-width=".8"/>
<!-- arrows -->
<g fill="#0000ff">
<use href="#au" x="41" y="156.6"/><use href="#ad" x="41" y="292.3"/><use href="#au" x="41" y="292.3"/><use href="#ad" x="41" y="392"/><use href="#au" x="41" y="392"/><use href="#ad" x="41" y="541.9"/><use href="#au" x="41" y="541.9"/>
<use href="#au" x="521.2" y="269.5"/><use href="#ad" x="521.2" y="358.3"/><use href="#au" x="521.2" y="358.3"/>
<use href="#au" x="870" y="193"/><use href="#ad" x="870" y="282.3"/><use href="#au" x="870" y="282.3"/><use href="#ad" x="870" y="372.3"/><use href="#au" x="870" y="372.3"/>
<path d="M566.5 239.8 L576 237 V242.6 Z"/><path d="M897 239.8 L887.5 237.2 V242.4 Z"/>
</g>
<g fill="#aaaaff"><use href="#au" x="207.5" y="156.6"/><use href="#ad" x="207.5" y="193"/><use href="#au" x="870" y="156.6"/><use href="#ad" x="870" y="193"/></g>
<g fill="#a89a60"><use href="#au" x="207.5" y="195.5" transform="translate(0,0)"/><path d="M178.5 239.8 L186 237.6 V242 Z"/><path d="M536.5 239.8 L544 237.6 V242 Z"/></g>
<!-- dim texts -->
<g fill="#1414ff" font-size="13.3" text-anchor="middle">
<text transform="translate(32,223.7) rotate(-90)">137,0</text>
<text transform="translate(32,342.5) rotate(-90)">100,0</text>
<text transform="translate(32,466.5) rotate(-90)">150,0</text>
<text transform="translate(512.4,314.3) rotate(-90)">90,0</text>
<text transform="translate(512.4,480) rotate(-90)">243,0</text>
<text transform="translate(861,212) rotate(-90)">37,0</text>
<text transform="translate(861,251) rotate(-90)">90,0</text>
<text transform="translate(861,328) rotate(-90)">90,0</text>
<text transform="translate(860.3,473.5) rotate(-90)">202,0</text>
<text x="718" y="231">337,5</text>
<text x="872.5" y="231">25,0</text>
</g>
<!-- room label -->
<rect x="588.8" y="312.3" width="135.2" height="31.2" fill="#fff" stroke="#333" stroke-width=".7"/><path d="M588.8 328 H724 M618.5 312.3 V343.5" stroke="#333" stroke-width=".7"/>
<g fill="#1414ff" font-size="13.5" text-anchor="middle"><text x="603.7" y="324.8">-1.3</text><text x="671.2" y="324.8">BOILER ROOM</text><text x="603.7" y="340">A</text><text x="670" y="340">12,89 m</text></g>
<circle cx="731.4" cy="389" r="26" fill="#fff" stroke="#333" stroke-width=".7"/>
<g fill="#222" text-anchor="middle"><text x="731.4" y="378.2" font-size="12.6">-1.3</text><text x="731.4" y="389.2" font-size="10.4" text-decoration="line-through">12,89 m²</text><text x="731.4" y="399.2" font-size="10.4">+8 °C</text><text x="731.4" y="408.6" font-size="10.4" text-decoration="line-through">0 W</text></g>
</g>
</svg>
<svg style="left:0;top:0" width="1100" height="597" viewBox="0 0 1100 597">
<path d="M21.0 117.8 V120.3 M31.0 117.8 V120.3 M50.9 117.8 V120.3 M60.9 117.8 V120.3 M70.9 117.8 V120.3 M80.8 117.8 V120.3 M100.7 117.8 V120.3 M110.7 117.8 V120.3 M120.7 117.8 V120.3 M130.6 117.8 V120.3 M150.6 117.8 V120.3 M160.5 117.8 V120.3 M170.5 117.8 V120.3 M180.5 117.8 V120.3 M200.4 117.8 V120.3 M210.3 117.8 V120.3 M220.3 117.8 V120.3 M230.3 117.8 V120.3 M250.2 117.8 V120.3 M260.2 117.8 V120.3 M270.1 117.8 V120.3 M280.1 117.8 V120.3 M300.0 117.8 V120.3 M310.0 117.8 V120.3 M319.9 117.8 V120.3 M329.9 117.8 V120.3 M349.8 117.8 V120.3 M359.8 117.8 V120.3 M369.7 117.8 V120.3 M379.7 117.8 V120.3 M399.6 117.8 V120.3 M409.6 117.8 V120.3 M419.6 117.8 V120.3 M429.5 117.8 V120.3 M449.5 117.8 V120.3 M459.4 117.8 V120.3 M469.4 117.8 V120.3 M479.3 117.8 V120.3 M499.3 117.8 V120.3 M509.2 117.8 V120.3 M519.2 117.8 V120.3 M529.2 117.8 V120.3 M549.1 117.8 V120.3 M559.0 117.8 V120.3 M569.0 117.8 V120.3 M579.0 117.8 V120.3 M598.9 117.8 V120.3 M608.9 117.8 V120.3 M618.8 117.8 V120.3 M628.8 117.8 V120.3 M648.7 117.8 V120.3 M658.7 117.8 V120.3 M668.6 117.8 V120.3 M678.6 117.8 V120.3 M698.5 117.8 V120.3 M708.5 117.8 V120.3 M718.5 117.8 V120.3 M728.4 117.8 V120.3 M748.3 117.8 V120.3 M758.3 117.8 V120.3 M768.3 117.8 V120.3 M778.2 117.8 V120.3 M798.2 117.8 V120.3 M808.1 117.8 V120.3 M818.1 117.8 V120.3 M828.0 117.8 V120.3 M848.0 117.8 V120.3 M857.9 117.8 V120.3 M867.9 117.8 V120.3 M877.9 117.8 V120.3" stroke="#3c3c3c" stroke-width=".9"/>
<path d="M90.8 115.6 V120.3 M190.4 115.6 V120.3 M290.0 115.6 V120.3 M389.7 115.6 V120.3 M489.3 115.6 V120.3 M588.9 115.6 V120.3 M688.6 115.6 V120.3 M788.2 115.6 V120.3 M887.8 115.6 V120.3" stroke="#909498" stroke-width="1.3"/>
<path d="M41.0 113 V120.3 M140.6 113 V120.3 M240.2 113 V120.3 M339.9 113 V120.3 M439.5 113 V120.3 M539.1 113 V120.3 M638.8 113 V120.3 M738.4 113 V120.3 M838.0 113 V120.3" stroke="#8a9094" stroke-width="1.7"/>
<text x="40.7" y="112.3" font-size="6.6" fill="#333" text-anchor="middle" font-family="Liberation Sans">-1</text>
<text x="140.3" y="112.3" font-size="6.6" fill="#333" text-anchor="middle" font-family="Liberation Sans">0</text>
<text x="239.9" y="112.3" font-size="6.6" fill="#333" text-anchor="middle" font-family="Liberation Sans">1</text>
<text x="339.6" y="112.3" font-size="6.6" fill="#333" text-anchor="middle" font-family="Liberation Sans">2</text>
<text x="439.2" y="112.3" font-size="6.6" fill="#333" text-anchor="middle" font-family="Liberation Sans">3</text>
<text x="538.8" y="112.3" font-size="6.6" fill="#333" text-anchor="middle" font-family="Liberation Sans">4</text>
<text x="638.5" y="112.3" font-size="6.6" fill="#333" text-anchor="middle" font-family="Liberation Sans">5</text>
<text x="738.1" y="112.3" font-size="6.6" fill="#333" text-anchor="middle" font-family="Liberation Sans">6</text>
<text x="837.7" y="112.3" font-size="6.6" fill="#333" text-anchor="middle" font-family="Liberation Sans">7</text>
<path d="M16 126.4 H18.7 M16 136.4 H18.7 M16 146.3 H18.7 M16 166.3 H18.7 M16 176.2 H18.7 M16 186.2 H18.7 M16 196.2 H18.7 M16 216.1 H18.7 M16 226.0 H18.7 M16 236.0 H18.7 M16 246.0 H18.7 M16 265.9 H18.7 M16 275.9 H18.7 M16 285.8 H18.7 M16 295.8 H18.7 M16 315.7 H18.7 M16 325.7 H18.7 M16 335.6 H18.7 M16 345.6 H18.7 M16 365.5 H18.7 M16 375.5 H18.7 M16 385.4 H18.7 M16 395.4 H18.7 M16 415.3 H18.7 M16 425.3 H18.7 M16 435.3 H18.7 M16 445.2 H18.7 M16 465.2 H18.7 M16 475.1 H18.7 M16 485.1 H18.7 M16 495.0 H18.7 M16 515.0 H18.7 M16 524.9 H18.7 M16 534.9 H18.7 M16 544.9 H18.7" stroke="#3c3c3c" stroke-width=".8"/>
<path d="M14.2 206.1 H18.6 M14.2 305.7 H18.6 M14.2 405.4 H18.6 M14.2 505.0 H18.6" stroke="#333" stroke-width=".8"/>
<path d="M12 156.3 H18.4 M12 255.9 H18.4 M12 355.6 H18.4 M12 455.2 H18.4" stroke="#444" stroke-width=".9"/>
<text transform="translate(10.8,156.3) rotate(-90)" x="0" y="0" font-size="6.6" fill="#333" text-anchor="middle" font-family="Liberation Sans">0</text>
<text transform="translate(10.8,255.9) rotate(-90)" x="0" y="0" font-size="6.6" fill="#333" text-anchor="middle" font-family="Liberation Sans">-1</text>
<text transform="translate(10.8,355.6) rotate(-90)" x="0" y="0" font-size="6.6" fill="#333" text-anchor="middle" font-family="Liberation Sans">-2</text>
<text transform="translate(10.8,455.2) rotate(-90)" x="0" y="0" font-size="6.6" fill="#333" text-anchor="middle" font-family="Liberation Sans">-3</text>
<path d="M4.3 123.4 H18.4" stroke="#f0a468" stroke-width=".9"/>
<path d="M18.4 156.3 H41" stroke="#c4c4ff" stroke-width=".8"/>
<text x="11.2" y="110.8" font-size="5" font-weight="bold" fill="#333" text-anchor="middle" font-family="Liberation Sans">µm</text>
<text x="11.2" y="119.3" font-size="5.6" fill="#333" text-anchor="middle" font-family="Liberation Sans">22</text>
</svg>
<!-- bottom layer bar -->
<div class="a" style="left:4.3px;top:553px;width:889.9px;height:12.5px;background:#e6e6e6"></div>
<div class="a" style="left:4.5px;top:554px;width:10px;height:11px;background:#f4f4f4;border:1px solid #d0d0d0"></div>
<div class="a" style="left:15.5px;top:554px;width:10px;height:11px;background:#f4f4f4;border:1px solid #d0d0d0"></div>
<svg style="left:4.5px;top:554px" width="22" height="11" viewBox="0 0 22 11"><path d="M5 2 L7.2 5 H6 V9 H4 V5 H2.8 Z" fill="#3a8ae8" stroke="#1a50a8" stroke-width=".4"/><path d="M16 9 L18.2 6 H17 V2 H15 V6 H13.8 Z" fill="#dcdcdc" stroke="#b0b0b0" stroke-width=".4"/></svg>
<div class="a" style="left:27px;top:553.5px;width:70.5px;height:11.5px;background:#efefef;border:1px solid #c4c4c4"></div>
<svg style="left:48px;top:554.5px" width="10" height="10" viewBox="0 0 10 10"><rect x=".5" y=".5" width="9" height="9" fill="#f4ecd0" stroke="#8a8a8a" stroke-width=".6"/><path d="M.6 1 L9.4 8 M.6 3.6 L6 9.4" stroke="#6a6a5a" stroke-width=".8"/><path d="M1 .8 H9 V4" fill="none" stroke="#d0b040" stroke-width="1"/></svg>
<div class="t" style="left:60.5px;top:554.8px;color:#222">-1</div>
<div class="ar" style="left:92.5px;top:558.5px;border-top-color:#222"></div>
<!-- layer tabs -->
<svg style="left:0;top:0" width="1100" height="597" viewBox="0 0 1100 597"><g stroke="#c4c4c4" stroke-width=".7"><path d="M681.5 553 L684.5 564.5 H719 L722.5 553 Z" fill="#f0f0f0"/><path d="M723 553 L726 564.5 H773 L776.5 553 Z" fill="#f0f0f0"/><path d="M832.5 553 L829.5 564.5 H868 L871.5 553 Z" fill="#f0f0f0"/><path d="M776.5 553 L779.5 564.5 H829.5 L833 553 Z" fill="#dcf6fb"/></g>
<g id="bulb" transform="translate(-2,1.6)"><path d="M686.5 557 A1.6 1.6 0 1 1 689.5 557 L688.8 559 H687.2 Z" fill="#f8b818" stroke="#c88a10" stroke-width=".3"/><rect x="687.2" y="559.3" width="1.6" height="1.5" fill="#9a9a9a"/></g><use href="#bulb" x="41.5"/><use href="#bulb" x="95.5"/><use href="#bulb" x="149"/>
<rect x="884.5" y="554.5" width="7" height="5.6" fill="#d0e8fc" stroke="#3a86d0" stroke-width=".8"/><path d="M888 561 L891.5 563.5 L890 558.5 Z" fill="#e8a878"/><path d="M886 561.5 H890" stroke="#3a86d0" stroke-width=".8"/></svg>
<div class="t" style="left:691px;top:555.2px;color:#222">Underlay</div>
<div class="t" style="left:733px;top:555.2px;color:#222">Construction</div>
<div class="t" style="left:786.5px;top:555.2px;color:#111;font-weight:bold">Water supply</div>
<div class="t" style="left:841.5px;top:555.2px;color:#222">Printout</div>
<div class="ar" style="left:877.5px;top:558.5px;border-top-color:#222"></div>
<!-- status bar -->
<div class="a" style="left:4.3px;top:565.5px;width:889.9px;height:12.2px;background:#0a79d3"></div>
<svg style="left:9px;top:567px" width="11" height="10" viewBox="0 0 11 10"><path d="M5.5 .8 L10.2 9 H.8 Z" fill="#fcd428" stroke="#fff" stroke-width=".8" stroke-linejoin="round"/><path d="M5.5 3.4 V6.4 M5.5 7.2 V8.200000000000001" stroke="#222" stroke-width="1"/></svg>
<div class="t" style="left:30.5px;top:568.3px;color:#fff;letter-spacing:-.36px">3,318; 0,335; 10,363</div>
<div class="t" style="left:764.3px;top:568.3px;color:#fff;letter-spacing:-.3px">ORTO | <span style="color:#5fb0f0">LOCK</span> | <span style="color:#5fb0f0">GRID</span> | AUTO | <span style="color:#5fb0f0">REP</span></div>
<div class="ar" style="left:883.5px;top:571px;border-top-color:#fff"></div>
<!-- diagnostics -->
<svg style="left:4px;top:582.5px" width="10" height="11" viewBox="0 0 10 11"><rect x="1" y="1.6" width="6.6" height="8.4" rx=".8" fill="#fafafa" stroke="#8a8a8a" stroke-width=".7"/><rect x="2.6" y=".6" width="3.4" height="1.8" fill="#9a9a9a"/><circle cx="6.8" cy="7.8" r="2.4" fill="#e83820"/><circle cx="6.8" cy="7.8" r=".9" fill="#fcd8d0"/></svg>
<div class="t" style="left:15px;top:584.3px;color:#333;letter-spacing:-.15px">Diagnostics</div>
<svg style="left:50.5px;top:584.5px" width="16" height="8" viewBox="0 0 16 8"><path d="M1.6 .8 V4.4 H4.4 V.8 M1.6 .8 H4.4 M.8 4.4 H5.2 M3 4.4 V7.2 M3.7 .8 V4.4" fill="none" stroke="#333" stroke-width=".7"/><path d="M10 1.4 L14 5.8 M14 1.4 L10 5.8" stroke="#222" stroke-width=".9"/></svg>
<div class="a" style="left:4px;top:594px;width:62px;height:3px;background:#cfcfcf"></div>
<!-- dropdown menu -->
<div class="a" style="left:318.9px;top:76.3px;width:215.6px;height:199.6px;background:#fff;border:1px solid #cccccc;box-shadow:1.5px 1.5px 3px rgba(0,0,0,.35)"></div>
<div class="a" style="left:319.9px;top:77.3px;width:213.6px;height:11.6px;background:#eeeeee;border-bottom:1px solid #dedede"></div>
<div class="t" style="left:324.2px;top:79.2px;font-weight:bold;color:#2a2a2a">Insert</div>
<div class="a" style="left:316.1px;top:219.1px;width:220.2px;height:31.2px;background:#cfe0f0;border:2.5px solid #fb0a0a"></div>
<div class="t" style="left:357px;top:97.2px;font-weight:bold;color:#2a2a2a">Cold water</div>
<div class="t" style="left:357px;top:123.4px;font-weight:bold;color:#2a2a2a">Hot water</div>
<div class="t" style="left:357px;top:149.7px;font-weight:bold;color:#2a2a2a">Circulation</div>
<div class="t" style="left:357px;top:176.4px;font-weight:bold;color:#2a2a2a">Pipe-run</div>
<div class="t" style="left:357px;top:202.7px;font-weight:bold;color:#2a2a2a">Cold water,Hot water</div>
<div class="t" style="left:357px;top:229.0px;font-weight:bold;color:#2a2a2a">Cold water, Circulation, Hot water</div>
<div class="t" style="left:357px;top:255.6px;font-weight:bold;color:#2a2a2a">No medium flow</div>
<svg style="left:0;top:0" width="1100" height="597" viewBox="0 0 1100 597">
<rect x="327.8" y="100.6" width="17.2" height="4" fill="#18d418"/><path d="M329.8 102.6 H343.0" stroke="#b6f6b6" stroke-width=".5"/><path d="M328.1 100.0 V105.2 M344.7 100.0 V105.2" stroke="#0a7a0a" stroke-width=".7"/>
<rect x="327.8" y="126.8" width="17.2" height="4" fill="#f25426"/><path d="M329.8 128.8 H343.0" stroke="#fcc8b4" stroke-width=".5"/><path d="M328.1 126.2 V131.4 M344.7 126.2 V131.4" stroke="#9c2c10" stroke-width=".7"/>
<rect x="327.8" y="153.1" width="17.2" height="4" fill="#b838ea"/><path d="M329.8 155.1 H343.0" stroke="#ecc0fa" stroke-width=".5"/><path d="M328.1 152.5 V157.7 M344.7 152.5 V157.7" stroke="#6a1a8c" stroke-width=".7"/>
<rect x="327.8" y="179.7" width="9" height="4" fill="#18d418"/><path d="M329.8 181.7 H334.8" stroke="#b6f6b6" stroke-width=".5"/><path d="M328.1 179.1 V184.3 M336.5 179.1 V184.3" stroke="#0a7a0a" stroke-width=".7"/>
<rect x="336.4" y="179.7" width="8.6" height="4" fill="#f25426"/><path d="M338.4 181.7 H343.0" stroke="#fcc8b4" stroke-width=".5"/><path d="M336.7 179.1 V184.3 M344.7 179.1 V184.3" stroke="#9c2c10" stroke-width=".7"/>
<rect x="327.8" y="202.6" width="17.2" height="4.4" fill="#18d418"/><path d="M329.8 204.8 H343.0" stroke="#b6f6b6" stroke-width=".5"/><path d="M328.1 202.0 V207.6 M344.7 202.0 V207.6" stroke="#0a7a0a" stroke-width=".7"/>
<rect x="327.8" y="209.2" width="17.2" height="4.4" fill="#f25426"/><path d="M329.8 211.4 H343.0" stroke="#fcc8b4" stroke-width=".5"/><path d="M328.1 208.6 V214.2 M344.7 208.6 V214.2" stroke="#9c2c10" stroke-width=".7"/>
<rect x="327.8" y="226.0" width="17.2" height="4.4" fill="#18d418"/><path d="M329.8 228.2 H343.0" stroke="#b6f6b6" stroke-width=".5"/><path d="M328.1 225.4 V231.0 M344.7 225.4 V231.0" stroke="#0a7a0a" stroke-width=".7"/>
<rect x="327.8" y="232.2" width="17.2" height="4.4" fill="#b838ea"/><path d="M329.8 234.4 H343.0" stroke="#ecc0fa" stroke-width=".5"/><path d="M328.1 231.6 V237.2 M344.7 231.6 V237.2" stroke="#6a1a8c" stroke-width=".7"/>
<rect x="327.8" y="238.4" width="17.2" height="4.4" fill="#f25426"/><path d="M329.8 240.6 H343.0" stroke="#fcc8b4" stroke-width=".5"/><path d="M328.1 237.8 V243.4 M344.7 237.8 V243.4" stroke="#9c2c10" stroke-width=".7"/>
<rect x="327.8" y="259.0" width="17.2" height="4" fill="#b4b4b4"/><path d="M329.8 261.0 H343.0" stroke="#f0f0f0" stroke-width=".5"/><path d="M328.1 258.4 V263.6 M344.7 258.4 V263.6" stroke="#555" stroke-width=".7"/>
<path d="M501.5 233.2 V242.8 L503.7 240.7 L505.3 244.2 L506.5 243.6 L504.9 240.2 H507.9 Z" fill="#fff" stroke="#222" stroke-width=".65"/>
</svg>
<!-- data table panel -->
<div class="a" style="left:898.2px;top:92.3px;width:199.8px;height:485.2px;background:#fff;border:1px solid #c8c8c8"></div>
<div class="a" style="left:898.2px;top:92.3px;width:199.8px;height:12.4px;background:#0a76d2"></div>
<div class="a" style="left:945px;top:96px;width:122px;height:5px;background:repeating-linear-gradient(45deg,#0a76d2 0,#0a76d2 1px,#3a90dc 1px,#3a90dc 2px);opacity:.6"></div>
<svg style="left:900.5px;top:93.5px" width="10" height="11" viewBox="0 0 10 11"><rect x=".8" y=".8" width="6.6" height="9" fill="#fafafa" stroke="#e8e0d0" stroke-width=".5"/><path d="M1.6 2.6 H6.4 M1.6 4.4 H6.4 M1.6 6.2 H6.4 M1.6 8 H6.4" stroke="#d84a3a" stroke-width=".7" stroke-dasharray="1.4 .6"/><path d="M4.2 8.6 L4.8 6.4 L8.4 1.8 L9.6 2.8 L6 7.4 Z" fill="#f0a628" stroke="#a86a10" stroke-width=".4"/></svg>
<div class="t" style="left:911.7px;top:94.7px;color:#fff;letter-spacing:-.15px">Data table</div>
<div class="ar" style="left:1073.5px;top:98.5px;border-top-color:#fff"></div>
<svg style="left:1078px;top:94.5px" width="18" height="8" viewBox="0 0 18 8"><path d="M2.600000000000001 .8 V4.4 H5.4 V.8 M2.600000000000001 .8 H5.4 M1.8 4.4 H6.2 M4 4.4 V7.2 M4.7 .8 V4.4" fill="none" stroke="#fff" stroke-width=".7"/><path d="M12 1.2 L16.4 5.8 M16.4 1.2 L12 5.8" stroke="#fff" stroke-width=".9"/></svg>
<div class="a" style="left:899.5px;top:104.7px;width:197.5px;height:18.6px;background:#f0f0f0;border-bottom:1px solid #cfcfcf"></div>
<div class="t" style="left:998px;top:106.8px;transform:translateX(-50%);color:#222">3* Pipe-run</div>
<div class="a" style="left:1088px;top:124px;width:8.5px;height:408.5px;background:#f0f0f0"></div>
<div class="a" style="left:1088.5px;top:124.5px;width:7.5px;height:7.5px;background:#fafafa;border:1px solid #dcdcdc"></div><div class="ar" style="left:1092.3px;top:127px;border-top:none;border-bottom:2px solid #cfcfcf;border-left-width:1.6px;border-right-width:1.6px"></div>
<div class="a" style="left:1088.5px;top:524.5px;width:7.5px;height:7.5px;background:#fafafa;border:1px solid #dcdcdc"></div><div class="ar" style="left:1092.3px;top:527.5px;border-top:2px solid #cfcfcf;border-left-width:1.6px;border-right-width:1.6px"></div>
<div class="a" style="left:899.5px;top:532.5px;width:197.5px;height:1px;background:#dcdcdc"></div>
<div class="t" style="left:906px;top:540.7px;font-weight:bold;color:#111">Pipe-run no.</div>
<div class="a" style="left:899.5px;top:123.3px;width:188.5px;height:11.8px;background:#f5f5f5"></div>
<div class="a" style="left:901.5px;top:127.4px;width:0;height:0;border-left:3.9px solid transparent;border-bottom:3.9px solid #2a2a2a"></div>
<div class="t" style="left:908.5px;top:124.8px;font-size:8.3px;color:#777;letter-spacing:-.1px">Component identification</div>
<div class="a" style="left:899.5px;top:134.9px;width:188.5px;height:12.6px;background:#f5f5f5"></div>
<div class="a" style="left:907px;top:135.4px;width:86px;height:11.6px;background:#ebebeb"></div>
<div class="a" style="left:993px;top:135.4px;width:94.5px;height:11.6px;background:#e8f3fd"></div>
<div class="t" style="left:908.5px;top:137.7px;color:#222">Pipe-run no.</div>
<div class="ar" style="left:1074.5px;top:140.4px;border-top-color:#111;border-left-width:2.1px;border-right-width:2.1px;border-top-width:2.5px"></div>
<svg style="left:1079.5px;top:137.2px" width="8" height="8" viewBox="0 0 8 8"><rect x="1.8" y=".6" width="5.6" height="4.4" fill="#cfe8fb" stroke="#3f96dc" stroke-width=".8"/><path d="M4.6 5 V6.6 M3 6.9 H6.6" stroke="#3f96dc" stroke-width=".8"/><rect x=".4" y="3.2" width="2.6" height="3.4" fill="#7ab8ea" stroke="#3f86c8" stroke-width=".4"/></svg>
<div class="a" style="left:994.2px;top:137.0px;width:.8px;height:8px;background:#222"></div>
<div class="a" style="left:899.5px;top:147.5px;width:188.5px;height:11.8px;background:#f5f5f5"></div>
<div class="a" style="left:901.5px;top:151.6px;width:0;height:0;border-left:3.9px solid transparent;border-bottom:3.9px solid #2a2a2a"></div>
<div class="t" style="left:908.5px;top:149.0px;font-size:8.3px;color:#777;letter-spacing:-.1px">Position</div>
<div class="a" style="left:899.5px;top:158.9px;width:188.5px;height:12.6px;background:#f5f5f5"></div>
<div class="a" style="left:907px;top:159.4px;width:86px;height:11.6px;background:#fff"></div>
<div class="a" style="left:993px;top:159.4px;width:94.5px;height:11.6px;background:#e8f3fd"></div>
<div class="t" style="left:908.5px;top:161.7px;color:#222">Elevation</div>
<div class="t" style="left:994.5px;top:161.7px;color:#e01818;letter-spacing:-.14px">???</div>
<div class="t" style="left:1078px;top:161.7px;color:#777;transform:translateX(-100%)">m</div>
<svg style="left:1079.5px;top:161.2px" width="8" height="8" viewBox="0 0 8 8"><rect x="1.8" y=".6" width="5.6" height="4.4" fill="#cfe8fb" stroke="#3f96dc" stroke-width=".8"/><path d="M4.6 5 V6.6 M3 6.9 H6.6" stroke="#3f96dc" stroke-width=".8"/><rect x=".4" y="3.2" width="2.6" height="3.4" fill="#7ab8ea" stroke="#3f86c8" stroke-width=".4"/></svg>
<div class="a" style="left:899.5px;top:171.5px;width:188.5px;height:12.6px;background:#f5f5f5"></div>
<div class="a" style="left:907px;top:172.0px;width:86px;height:11.6px;background:#fff"></div>
<div class="a" style="left:993px;top:172.0px;width:94.5px;height:11.6px;background:#e8f3fd"></div>
<div class="t" style="left:908.5px;top:174.3px;color:#222">Distance from floor</div>
<div class="t" style="left:994.5px;top:174.3px;color:#e01818;letter-spacing:-.14px">???</div>
<div class="t" style="left:1078px;top:174.3px;color:#777;transform:translateX(-100%)">m</div>
<svg style="left:1079.5px;top:173.8px" width="8" height="8" viewBox="0 0 8 8"><rect x="1.8" y=".6" width="5.6" height="4.4" fill="#cfe8fb" stroke="#3f96dc" stroke-width=".8"/><path d="M4.6 5 V6.6 M3 6.9 H6.6" stroke="#3f96dc" stroke-width=".8"/><rect x=".4" y="3.2" width="2.6" height="3.4" fill="#7ab8ea" stroke="#3f86c8" stroke-width=".4"/></svg>
<div class="a" style="left:899.5px;top:184.1px;width:188.5px;height:11.8px;background:#f5f5f5"></div>
<div class="a" style="left:901.5px;top:188.2px;width:0;height:0;border-left:3.9px solid transparent;border-bottom:3.9px solid #2a2a2a"></div>
<div class="t" style="left:908.5px;top:185.6px;font-size:8.3px;color:#777;letter-spacing:-.1px">Technical data</div>
<div class="a" style="left:899.5px;top:195.5px;width:188.5px;height:12.6px;background:#f5f5f5"></div>
<div class="a" style="left:907px;top:196.0px;width:86px;height:11.6px;background:#fff"></div>
<div class="a" style="left:993px;top:196.0px;width:94.5px;height:11.6px;background:#e8f3fd"></div>
<div class="t" style="left:908.5px;top:198.3px;color:#222">L</div>
<div class="t" style="left:1078px;top:198.3px;color:#777;transform:translateX(-100%)">m</div>
<svg style="left:1079.5px;top:197.8px" width="8" height="8" viewBox="0 0 8 8"><rect x="1.8" y=".6" width="5.6" height="4.4" fill="#cfe8fb" stroke="#3f96dc" stroke-width=".8"/><path d="M4.6 5 V6.6 M3 6.9 H6.6" stroke="#3f96dc" stroke-width=".8"/><rect x=".4" y="3.2" width="2.6" height="3.4" fill="#7ab8ea" stroke="#3f86c8" stroke-width=".4"/></svg>
<div class="a" style="left:899.5px;top:208.1px;width:188.5px;height:12.6px;background:#f5f5f5"></div>
<div class="a" style="left:907px;top:208.6px;width:86px;height:11.6px;background:#fff"></div>
<div class="a" style="left:993px;top:208.6px;width:94.5px;height:11.6px;background:#e8f3fd"></div>
<div class="t" style="left:908.5px;top:210.9px;color:#222">Pipe type</div>
<div class="t" style="left:994.5px;top:210.9px;color:#1a1ad0;letter-spacing:-.14px">(size) / PN10</div>
<div class="ar" style="left:1074.5px;top:213.6px;border-top-color:#111;border-left-width:2.1px;border-right-width:2.1px;border-top-width:2.5px"></div>
<svg style="left:1079.5px;top:210.4px" width="8" height="8" viewBox="0 0 8 8"><rect x="1.8" y=".6" width="5.6" height="4.4" fill="#cfe8fb" stroke="#3f96dc" stroke-width=".8"/><path d="M4.6 5 V6.6 M3 6.9 H6.6" stroke="#3f96dc" stroke-width=".8"/><rect x=".4" y="3.2" width="2.6" height="3.4" fill="#7ab8ea" stroke="#3f86c8" stroke-width=".4"/></svg>
<div class="a" style="left:899.5px;top:220.7px;width:188.5px;height:12.6px;background:#f5f5f5"></div>
<div class="a" style="left:907px;top:221.2px;width:86px;height:11.6px;background:#fff"></div>
<div class="a" style="left:993px;top:221.2px;width:94.5px;height:11.6px;background:#e8f3fd"></div>
<div class="t" style="left:908.5px;top:223.5px;color:#222">Location</div>
<div class="t" style="left:994.5px;top:223.5px;color:#1a1ad0;letter-spacing:-.14px">?</div>
<div class="ar" style="left:1074.5px;top:226.2px;border-top-color:#111;border-left-width:2.1px;border-right-width:2.1px;border-top-width:2.5px"></div>
<svg style="left:1079.5px;top:223.0px" width="8" height="8" viewBox="0 0 8 8"><rect x="1.8" y=".6" width="5.6" height="4.4" fill="#cfe8fb" stroke="#3f96dc" stroke-width=".8"/><path d="M4.6 5 V6.6 M3 6.9 H6.6" stroke="#3f96dc" stroke-width=".8"/><rect x=".4" y="3.2" width="2.6" height="3.4" fill="#7ab8ea" stroke="#3f86c8" stroke-width=".4"/></svg>
<div class="a" style="left:899.5px;top:233.4px;width:188.5px;height:12.6px;background:#f5f5f5"></div>
<div class="a" style="left:907px;top:233.9px;width:86px;height:11.6px;background:#fff"></div>
<div class="a" style="left:993px;top:233.9px;width:94.5px;height:11.6px;background:#fff"></div>
<div class="t" style="left:908.5px;top:236.2px;color:#222">Connection cat. and type</div>
<div class="t" style="left:994.5px;top:236.2px;color:#222;letter-spacing:-.14px">(same as pipe-run catalo</div>
<div class="ar" style="left:1074.5px;top:238.9px;border-top-color:#111;border-left-width:2.1px;border-right-width:2.1px;border-top-width:2.5px"></div>
<div class="a" style="left:899.5px;top:246.0px;width:188.5px;height:12.6px;background:#f5f5f5"></div>
<div class="a" style="left:907px;top:246.5px;width:86px;height:11.6px;background:#fff"></div>
<div class="a" style="left:993px;top:246.5px;width:94.5px;height:11.6px;background:#fff"></div>
<div class="t" style="left:908.5px;top:248.8px;color:#222">Bend type</div>
<div class="t" style="left:994.5px;top:248.8px;color:#222;letter-spacing:-.14px">(size)</div>
<div class="ar" style="left:1074.5px;top:251.5px;border-top-color:#111;border-left-width:2.1px;border-right-width:2.1px;border-top-width:2.5px"></div>
<div class="a" style="left:899.5px;top:258.7px;width:188.5px;height:12.6px;background:#f5f5f5"></div>
<div class="a" style="left:907px;top:259.2px;width:86px;height:11.6px;background:#fff"></div>
<div class="a" style="left:993px;top:259.2px;width:94.5px;height:11.6px;background:#e8f3fd"></div>
<div class="t" style="left:908.5px;top:261.5px;color:#222">Insulation</div>
<div class="t" style="left:994.5px;top:261.5px;color:#1a1ad0;letter-spacing:-.14px">(NO INSULATION)</div>
<div class="ar" style="left:1074.5px;top:264.2px;border-top-color:#111;border-left-width:2.1px;border-right-width:2.1px;border-top-width:2.5px"></div>
<svg style="left:1079.5px;top:261.0px" width="8" height="8" viewBox="0 0 8 8"><rect x="1.8" y=".6" width="5.6" height="4.4" fill="#cfe8fb" stroke="#3f96dc" stroke-width=".8"/><path d="M4.6 5 V6.6 M3 6.9 H6.6" stroke="#3f96dc" stroke-width=".8"/><rect x=".4" y="3.2" width="2.6" height="3.4" fill="#7ab8ea" stroke="#3f86c8" stroke-width=".4"/></svg>
<div class="a" style="left:899.5px;top:271.3px;width:188.5px;height:12.6px;background:#f5f5f5"></div>
<div class="a" style="left:907px;top:271.8px;width:86px;height:11.6px;background:#fff"></div>
<div class="a" style="left:993px;top:271.8px;width:94.5px;height:11.6px;background:#fff"></div>
<div class="t" style="left:908.5px;top:274.1px;color:#222">Component status</div>
<div class="t" style="left:994.5px;top:274.1px;color:#222;letter-spacing:-.14px">under design</div>
<div class="ar" style="left:1074.5px;top:276.8px;border-top-color:#111;border-left-width:2.1px;border-right-width:2.1px;border-top-width:2.5px"></div>
<div class="a" style="left:899.5px;top:283.9px;width:188.5px;height:11.8px;background:#f5f5f5"></div>
<div class="a" style="left:901.5px;top:288.0px;width:0;height:0;border-left:3.9px solid transparent;border-bottom:3.9px solid #2a2a2a"></div>
<div class="t" style="left:908.5px;top:285.4px;font-size:8.3px;color:#777;letter-spacing:-.1px">View style</div>
<div class="a" style="left:899.5px;top:295.3px;width:188.5px;height:12.6px;background:#f5f5f5"></div>
<div class="a" style="left:907px;top:295.8px;width:86px;height:11.6px;background:#fff"></div>
<div class="a" style="left:993px;top:295.8px;width:94.5px;height:11.6px;background:#e8f3fd"></div>
<div class="t" style="left:908.5px;top:298.1px;color:#222">Element style</div>
<div class="ar" style="left:1074.5px;top:300.8px;border-top-color:#111;border-left-width:2.1px;border-right-width:2.1px;border-top-width:2.5px"></div>
<svg style="left:1079.5px;top:297.6px" width="8" height="8" viewBox="0 0 8 8"><rect x="1.8" y=".6" width="5.6" height="4.4" fill="#cfe8fb" stroke="#3f96dc" stroke-width=".8"/><path d="M4.6 5 V6.6 M3 6.9 H6.6" stroke="#3f96dc" stroke-width=".8"/><rect x=".4" y="3.2" width="2.6" height="3.4" fill="#7ab8ea" stroke="#3f86c8" stroke-width=".4"/></svg>
<div class="a" style="left:899.5px;top:307.9px;width:188.5px;height:11.8px;background:#f5f5f5"></div>
<div class="a" style="left:901.5px;top:312.0px;width:0;height:0;border-left:3.9px solid transparent;border-bottom:3.9px solid #2a2a2a"></div>
<div class="t" style="left:908.5px;top:309.4px;font-size:8.3px;color:#777;letter-spacing:-.1px">Water supply</div>
<div class="a" style="left:899.5px;top:319.2px;width:188.5px;height:12.6px;background:#f5f5f5"></div>
<div class="a" style="left:907px;top:319.7px;width:86px;height:11.6px;background:#fff"></div>
<div class="a" style="left:993px;top:319.7px;width:94.5px;height:11.6px;background:#e8f3fd"></div>
<div class="t" style="left:908.5px;top:322.0px;color:#222">θamb</div>
<div class="t" style="left:994.5px;top:322.0px;color:#1a1ad0;letter-spacing:-.14px">20,0</div>
<div class="t" style="left:1078px;top:322.0px;color:#777;transform:translateX(-100%)">°C</div>
<svg style="left:1079.5px;top:321.5px" width="8" height="8" viewBox="0 0 8 8"><rect x="1.8" y=".6" width="5.6" height="4.4" fill="#cfe8fb" stroke="#3f96dc" stroke-width=".8"/><path d="M4.6 5 V6.6 M3 6.9 H6.6" stroke="#3f96dc" stroke-width=".8"/><rect x=".4" y="3.2" width="2.6" height="3.4" fill="#7ab8ea" stroke="#3f86c8" stroke-width=".4"/></svg>
</body></html>
